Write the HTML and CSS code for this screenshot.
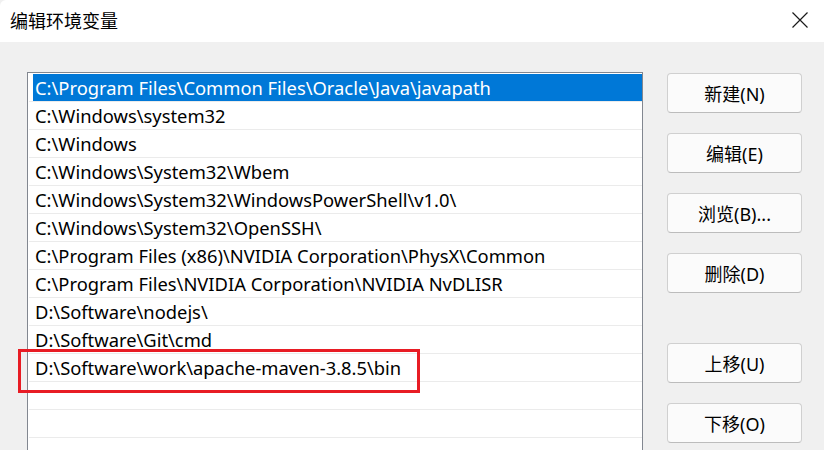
FILE: index.html
```html
<!DOCTYPE html>
<html lang="zh-CN">
<head>
<meta charset="utf-8">
<title>编辑环境变量</title>
<link rel="stylesheet" href="styles.css">
</head>
<body>
<div class="window">
  <div class="titlebar">
    <div class="title">编辑环境变量</div>
    <div class="close" aria-label="关闭">
      <svg width="16" height="16" viewBox="0 0 16 16"><path d="M0.5 0.5 L15.5 15.5 M15.5 0.5 L0.5 15.5" stroke="#1a1a1a" stroke-width="1.2" fill="none"/></svg>
    </div>
  </div>
  <div class="content">
    <div class="listbox">
      <div class="row selected"><span class="label">C:\Program Files\Common Files\Oracle\Java\javapath</span></div>
      <div class="row"><span class="label">C:\Windows\system32</span></div>
      <div class="row"><span class="label">C:\Windows</span></div>
      <div class="row"><span class="label">C:\Windows\System32\Wbem</span></div>
      <div class="row"><span class="label">C:\Windows\System32\WindowsPowerShell\v1.0\</span></div>
      <div class="row"><span class="label">C:\Windows\System32\OpenSSH\</span></div>
      <div class="row"><span class="label">C:\Program Files (x86)\NVIDIA Corporation\PhysX\Common</span></div>
      <div class="row"><span class="label">C:\Program Files\NVIDIA Corporation\NVIDIA NvDLISR</span></div>
      <div class="row"><span class="label">D:\Software\nodejs\</span></div>
      <div class="row"><span class="label">D:\Software\Git\cmd</span></div>
      <div class="row highlight-row"><span class="label">D:\Software\work\apache-maven-3.8.5\bin</span><span class="redbox"></span></div>
      <div class="row"><span class="label"></span></div>
      <div class="row"><span class="label"></span></div>
      <div class="row"><span class="label"></span></div>
    </div>
    <div class="buttons">
      <div class="group">
        <button class="btn">新建(N)</button>
        <button class="btn">编辑(E)</button>
        <button class="btn">浏览(B)...</button>
        <button class="btn">删除(D)</button>
      </div>
      <div class="group">
        <button class="btn">上移(U)</button>
        <button class="btn">下移(O)</button>
      </div>
    </div>
  </div>
</div>
</body>
</html>
```
FILE: styles.css
```css
* { box-sizing: border-box; }
html, body {
  margin: 0;
  padding: 0;
  width: 824px;
  height: 450px;
  overflow: hidden;
  background: #f0f0f0;
}
body {
  font-family: "Noto Sans", "Noto Sans CJK SC", sans-serif;
  color: #000;
}
.window {
  width: 824px;
  height: 450px;
  background: #f0f0f0;
  border-top-left-radius: 6px;
  overflow: hidden;
}
.titlebar {
  height: 42px;
  background: #fff;
  display: flex;
  align-items: center;
  justify-content: space-between;
  padding: 0 16px 2px 10px;
}
.title {
  font-family: "Noto Sans CJK SC", sans-serif;
  font-size: 18px;
  line-height: 20px;
  color: #000;
}
.close {
  width: 16px;
  height: 16px;
  display: flex;
}
.content {
  display: flex;
  align-items: flex-start;
  padding: 30px 0 0 27px;
}
.listbox {
  width: 616px;
  height: 400px;
  background: #fff;
  border: 1px solid #828790;
  border-bottom: none;
  padding: 1px 0 0 1px;
  display: flex;
  flex-direction: column;
  flex-shrink: 0;
}
.row {
  height: 28px;
  flex-shrink: 0;
  border-bottom: 1px solid #ebebeb;
  padding-left: 4px;
  display: flex;
  position: relative;
}
.label {
  flex: 1;
  display: block;
  padding-left: 2px;
  font-size: 18.35px;
  line-height: 27px;
  white-space: nowrap;
  color: #000;
}
.selected .label {
  background: #0078d7;
  color: #fff;
}
.redbox {
  position: absolute;
  left: -11px;
  top: -5px;
  width: 402px;
  height: 44px;
  border: 3px solid #e81c24;
  pointer-events: none;
}
.buttons {
  margin-left: 24px;
  padding-top: 1px;
  display: flex;
  flex-direction: column;
  gap: 50px;
}
.group {
  display: flex;
  flex-direction: column;
  gap: 20px;
}
.btn {
  width: 135px;
  height: 40px;
  background: #fbfbfb;
  border: 1px solid #d0d0d0;
  border-bottom-color: #bcbcbc;
  border-radius: 4px;
  font-family: "Noto Sans", "Noto Sans CJK SC", sans-serif;
  font-size: 18px;
  color: #000;
  padding: 0;
  margin: 0;
}
```
